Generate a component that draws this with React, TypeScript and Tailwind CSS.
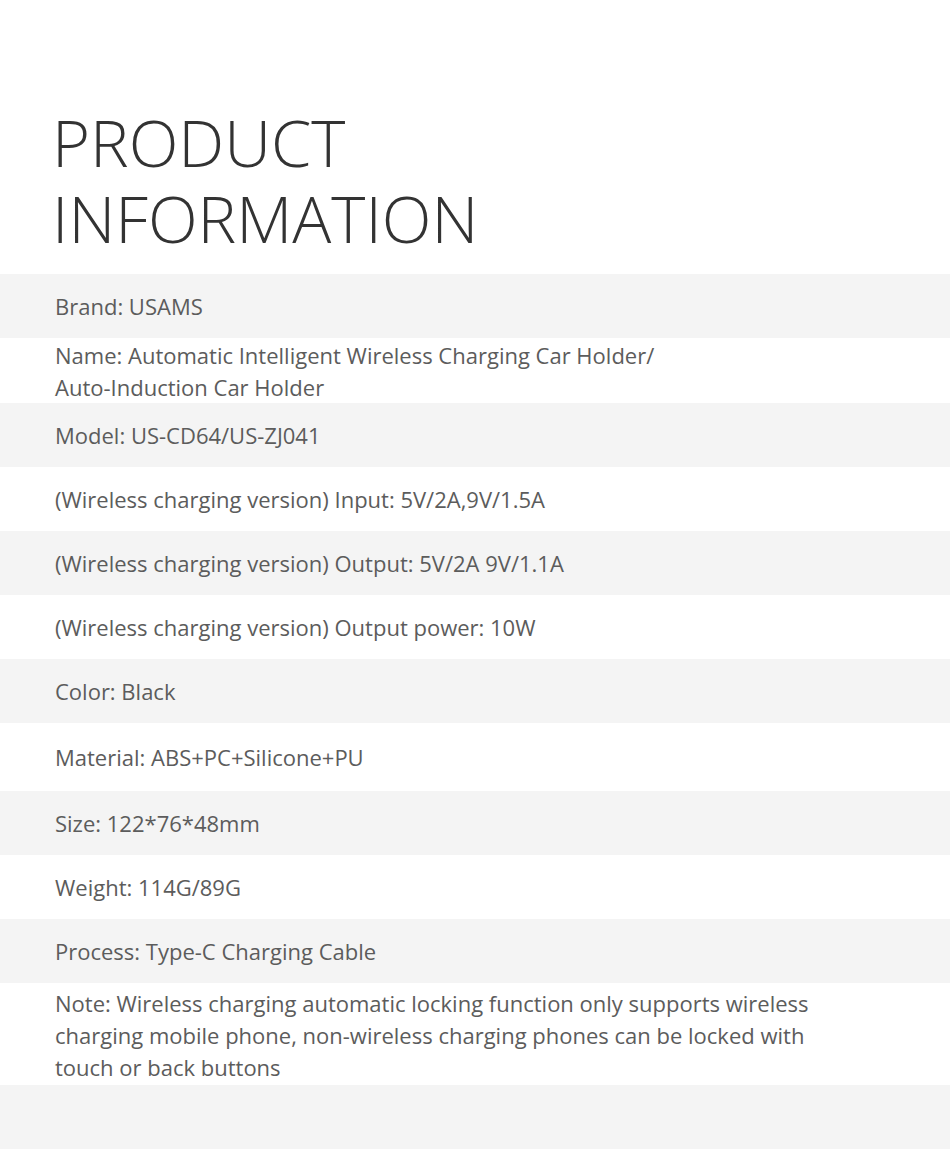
import React from 'react';

const rows: string[][] = [
  ['Brand: USAMS'],
  ['Name: Automatic Intelligent Wireless Charging Car Holder/', 'Auto-Induction Car Holder'],
  ['Model: US-CD64/US-ZJ041'],
  ['(Wireless charging version) Input: 5V/2A,9V/1.5A'],
  ['(Wireless charging version) Output: 5V/2A 9V/1.1A'],
  ['(Wireless charging version) Output power: 10W'],
  ['Color: Black'],
  ['Material: ABS+PC+Silicone+PU'],
  ['Size: 122*76*48mm'],
  ['Weight: 114G/89G'],
  ['Process: Type-C Charging Cable'],
  [
    'Note: Wireless charging automatic locking function only supports wireless',
    'charging mobile phone, non-wireless charging phones can be locked with',
    'touch or back buttons',
  ],
];

const padFor = (i: number, n: number) => {
  if (n === 3) return 'pt-[4px] pb-[2px]';
  if (n === 2) return 'pt-[1px]';
  if (i === 7) return 'py-[18px]';
  return 'py-4';
};

const App: React.FC = () => {
  return (
    <div className="w-[950px] h-[1158px] bg-white font-['Open_Sans',sans-serif]">
      <div className="h-[274px] pt-[104px] pl-[52px] text-[65px] leading-[76px] font-light text-[#333333]">
        <h1>PRODUCT</h1>
        <h1>INFORMATION</h1>
      </div>
      {rows.map((lines, i) => (
        <div
          key={i}
          className={`pl-[55px] text-[22px] leading-8 text-[#5c5c5c] ${i % 2 === 0 ? 'bg-[#f4f4f4]' : 'bg-white'} ${padFor(i, lines.length)}`}
        >
          {lines.map((l, j) => (
            <p key={j}>{l}</p>
          ))}
        </div>
      ))}
      <div className="h-[64px] bg-[#f4f4f4]" />
    </div>
  );
};

export default App;
